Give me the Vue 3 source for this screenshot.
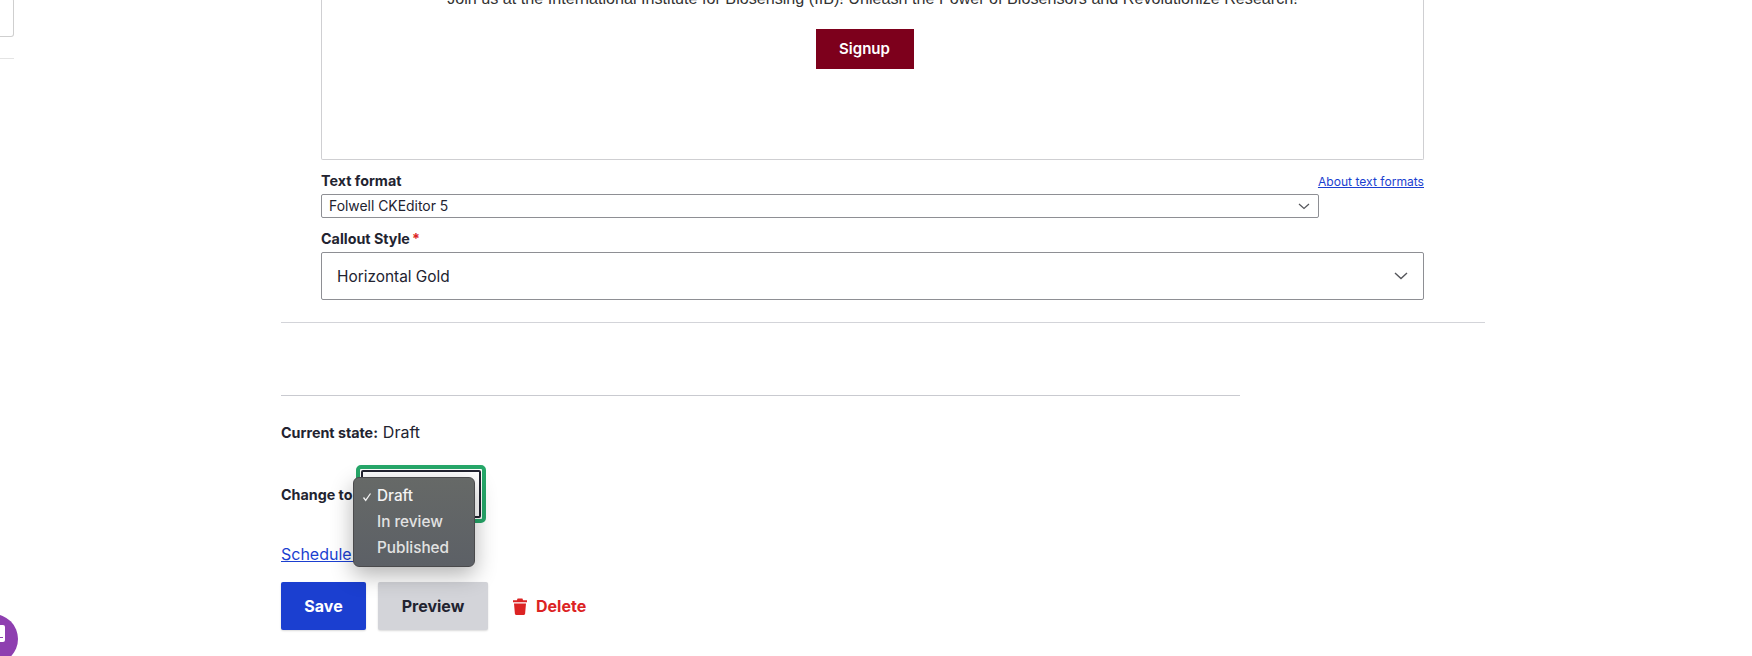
<script setup>
const states = [
  { label: 'Draft', checked: true },
  { label: 'In review', checked: false },
  { label: 'Published', checked: false },
]
</script>

<template>
  <div class="page">
    <aside class="side">
      <div class="side-box"></div>
      <div class="side-line"></div>
    </aside>

    <main class="content">
      <section class="field-group">
        <div class="editor">
          <p class="editor-text">Join us at the International Institute for Biosensing (IIB)! Unleash the Power of Biosensors and Revolutionize Research!</p>
          <a class="signup">Signup</a>
        </div>

        <div class="format-head">
          <span class="label">Text format</span>
          <a class="about">About text formats</a>
        </div>
        <div class="select select-small">
          <span>Folwell CKEditor 5</span>
          <svg width="12" height="7" viewBox="0 0 12 7"><path d="M1 1l5 4.5L11 1" fill="none" stroke="#55565b" stroke-width="1.2" /></svg>
        </div>

        <div class="label callout-label">Callout Style<span class="req">*</span></div>
        <div class="select select-large">
          <span>Horizontal Gold</span>
          <svg width="14" height="8" viewBox="0 0 14 8"><path d="M1 1l6 5.5L13 1" fill="none" stroke="#55565b" stroke-width="1.4" /></svg>
        </div>
      </section>

      <hr class="rule rule-wide" />
      <hr class="rule rule-narrow" />

      <div class="state-line"><span class="label">Current state:</span> <span class="state-value">Draft</span></div>

      <div class="change-row">
        <span class="label change-label">Change to</span>
        <div class="focus-ring"><div class="native-select"></div></div>
        <ul class="popup">
          <li v-for="s in states" :key="s.label">
            <svg v-if="s.checked" class="check" width="10" height="10" viewBox="0 0 10 10"><path d="M1.5 5.5l2.2 2.8L8.5 1.5" fill="none" stroke="#f2f2f2" stroke-width="1.3" /></svg>
            {{ s.label }}
          </li>
        </ul>
      </div>

      <a class="schedule">Schedule publishing</a>

      <div class="actions">
        <button class="btn btn-save">Save</button>
        <button class="btn btn-preview">Preview</button>
        <a class="delete">
          <svg width="14" height="17" viewBox="0 0 14 17"><path fill="#dc2323" d="M4.6.6h4.8l.7 1.6H14v2H0v-2h3.9zM1 5.4h12l-.9 10.4c0 .7-.6 1.2-1.3 1.2H3.2c-.7 0-1.3-.5-1.3-1.2z" /></svg>
          Delete
        </a>
      </div>
    </main>

    <div class="chat-bubble"><span class="chat-glyph"></span></div>
  </div>
</template>

<style>
html, body { margin: 0; background: #fff; overflow: hidden; }
</style>

<style scoped>
.page {
  position: relative;
  display: flex;
  width: 1752px;
  height: 656px;
  overflow: hidden;
  background: #fff;
  color: #222330;
  font-family: Inter, "Noto Sans", sans-serif;
  font-size: 14px;
}

.side { width: 14px; flex: none; }
.side-box {
  height: 39px;
  margin-top: -2px;
  box-sizing: border-box;
  border: 1px solid #cfcfcf;
  border-left: 0;
  border-radius: 0 3px 3px 0;
}
.side-line { height: 1px; margin-top: 21px; background: #e4e4e4; }

.content { margin-left: 267px; width: 1204px; flex: none; }

.field-group { padding: 0 61px 0 40px; }

.editor {
  height: 201px;
  margin-top: -41px;
  box-sizing: border-box;
  border: 1px solid #cfcfd2;
  border-top: 0;
  border-radius: 0 0 2px 2px;
  text-align: center;
  padding-top: 29px;
}
.editor-text {
  margin: 0;
  height: 41px;
  font-family: "Liberation Sans", Arial, sans-serif;
  font-size: 16.15px;
  line-height: 20px;
  color: #333;
}
.signup {
  display: inline-block;
  width: 98px;
  height: 40px;
  margin-right: 16px;
  line-height: 40px;
  background: #7d001c;
  color: #fff;
  font-weight: 600;
  font-size: 15px;
}

.label { font-weight: 700; font-size: 14.3px; color: #222330; }

.format-head {
  display: flex;
  justify-content: space-between;
  align-items: baseline;
  margin-top: 12px;
  height: 22px;
  line-height: 17px;
}
.about { font-size: 12.1px; color: #1b3fd0; text-decoration: underline; }

.select {
  display: flex;
  align-items: center;
  justify-content: space-between;
  box-sizing: border-box;
  border: 1px solid #8e8f94;
  border-radius: 2px;
  background: #fff;
}
.select-small {
  width: 998px;
  height: 24px;
  padding: 0 8px 0 7px;
  font-size: 13.9px;
}
.select-large {
  height: 48px;
  padding: 0 15px;
  font-size: 15.4px;
}

.callout-label { margin-top: 12px; height: 22px; line-height: 17px; }
.req { color: #dc2323; margin-left: 2px; }

.rule { margin: 0; border: 0; height: 1px; background: #d3d4d9; }
.rule-wide { margin-top: 22px; }
.rule-narrow { width: 959px; margin-top: 72px; background: #c9cad0; }

.state-line { margin-top: 26px; height: 20px; line-height: 20px; }
.state-value { font-size: 16px; margin-left: 1px; }

.change-row {
  position: relative;
  display: flex;
  align-items: center;
  margin-top: 23px;
  height: 58px;
}
.change-label { width: 75px; flex: none; }
.focus-ring {
  box-sizing: border-box;
  width: 130px;
  height: 58px;
  padding: 1px;
  border: 4px solid #26a769;
  border-radius: 5px;
  background: #fff;
}
.native-select {
  height: 100%;
  box-sizing: border-box;
  border: 2px solid #222330;
  border-radius: 2px;
}

.popup {
  position: absolute;
  left: 72px;
  top: 12px;
  width: 122px;
  height: 90px;
  box-sizing: border-box;
  margin: 0;
  padding: 5px 0 0 23px;
  list-style: none;
  border: 1px solid #4a4a4c;
  border-radius: 6px;
  background: linear-gradient(180deg, #666967, #5c6066);
  box-shadow: 0 8px 22px rgba(0, 0, 0, 0.3);
  color: #f4f4f4;
  font-size: 15.3px;
  font-weight: 500;
}
.popup li { position: relative; height: 26px; line-height: 26px; }
.popup li:not(:first-child) { color: #e2e2e2; }
.check { position: absolute; left: -15px; top: 9px; }

.schedule {
  display: block;
  margin-top: 21px;
  font-size: 16px;
  line-height: 20px;
  color: #1b3fd0;
  text-decoration: underline;
}

.actions { display: flex; align-items: center; margin-top: 18px; }
.btn {
  height: 48px;
  border: 0;
  border-radius: 2px;
  font-family: inherit;
  font-size: 16px;
  font-weight: 700;
  box-shadow: 0 1px 2px rgba(0, 0, 0, 0.15);
}
.btn-save { width: 85px; background: #1b3fd0; color: #fff; }
.btn-preview { width: 110px; margin-left: 12px; background: #d3d4d9; color: #222330; }
.delete {
  display: flex;
  align-items: center;
  gap: 9px;
  margin-left: 25px;
  color: #dc2323;
  font-size: 16px;
  font-weight: 700;
}

.chat-bubble {
  position: absolute;
  left: -32px;
  top: 614px;
  width: 50px;
  height: 50px;
  border-radius: 50%;
  background: #8e3fb0;
}
.chat-glyph {
  position: absolute;
  right: 13px;
  top: 11px;
  width: 11px;
  height: 17px;
  background: #fff;
  border-radius: 2px;
}
.chat-glyph::after {
  content: "";
  position: absolute;
  right: 2px;
  bottom: 4px;
  width: 4px;
  height: 1px;
  background: #8e3fb0;
}
</style>
